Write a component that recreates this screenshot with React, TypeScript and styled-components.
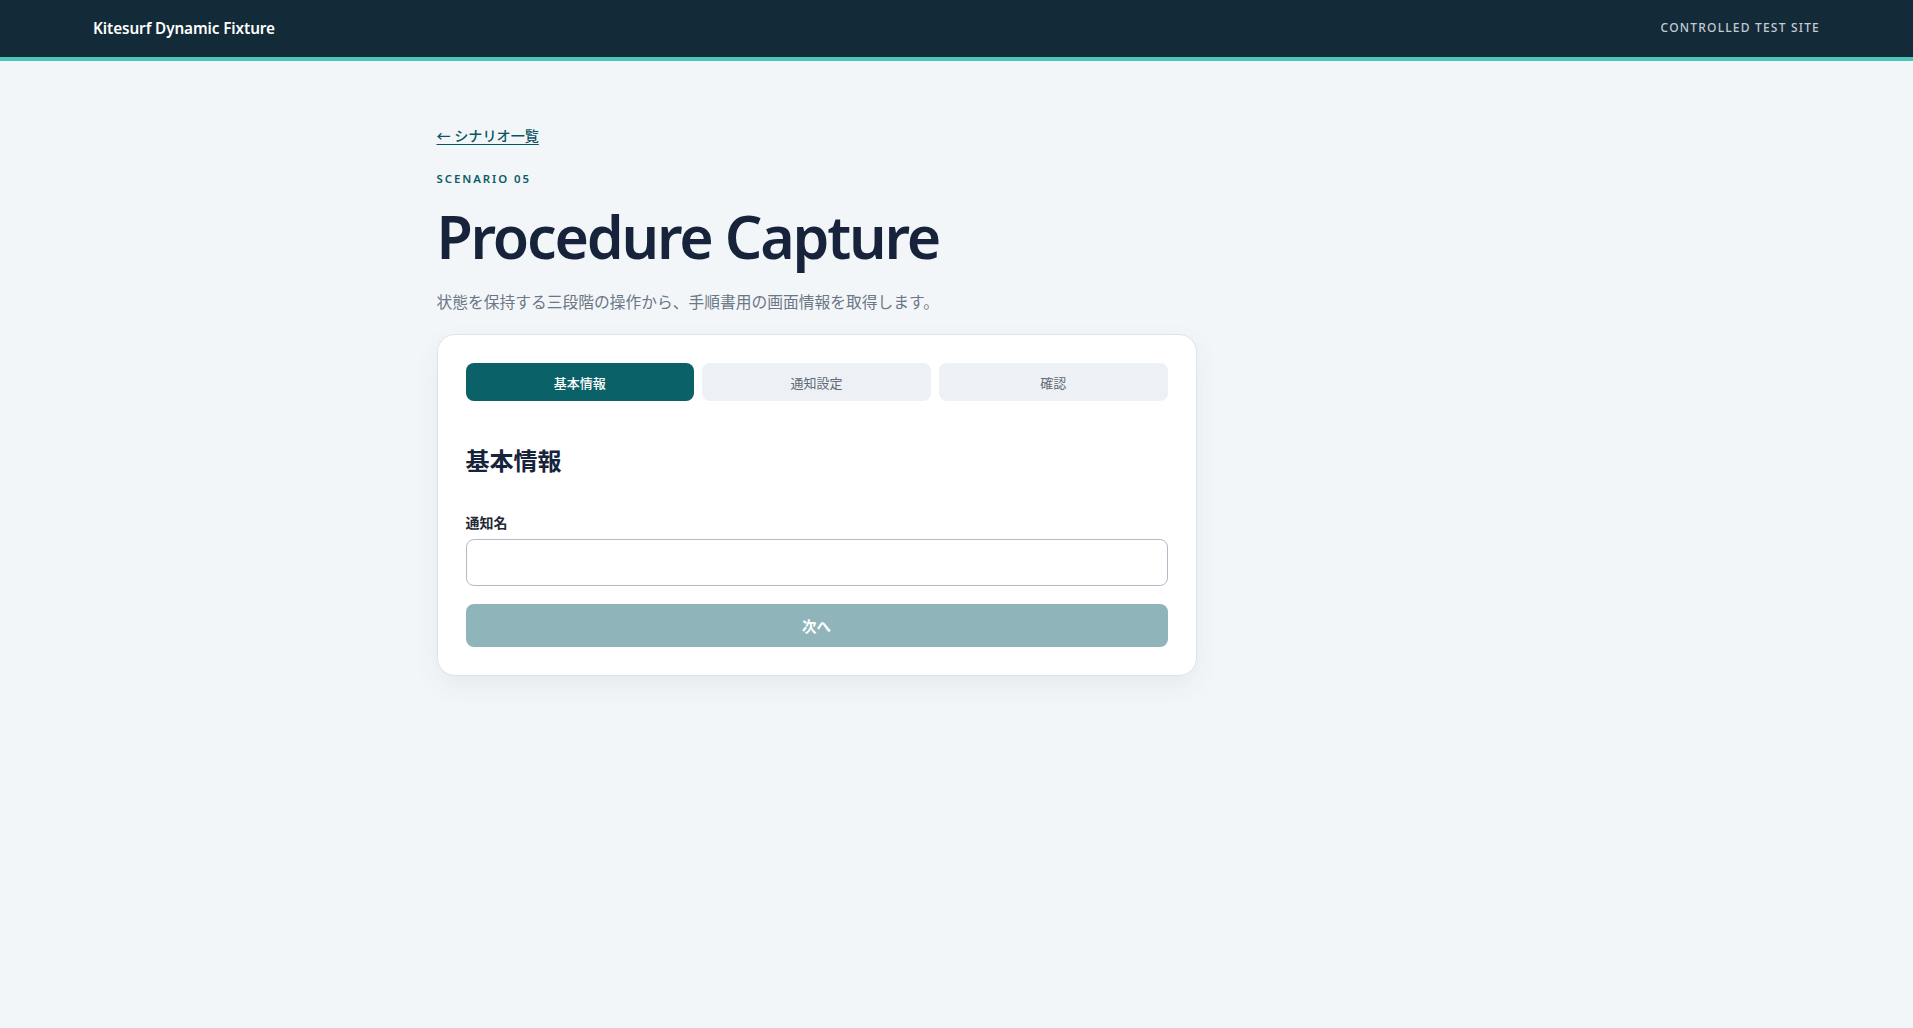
import React from "react";
import styled, { createGlobalStyle } from "styled-components";

const GlobalStyle = createGlobalStyle`
  * { box-sizing: border-box; }
  html, body { margin: 0; padding: 0; }
  body {
    background: #f3f6f9;
    font-family: "Noto Sans", "Noto Sans CJK JP", sans-serif;
    color: #17233a;
    min-height: 100vh;
  }
`;

const TopBar = styled.header`
  height: 61px;
  background: #132a38;
  border-bottom: 4px solid #4cc4bb;
  display: flex;
  align-items: center;
  justify-content: space-between;
  padding: 0 93px 2px 93px;
`;

const Brand = styled.div`
  color: #ffffff;
  font-size: 15.3px;
  font-weight: 600;
  letter-spacing: -0.1px;
`;

const SiteTag = styled.div`
  color: #c3cbd5;
  font-size: 12px;
  font-weight: 500;
  letter-spacing: 0.1em;
`;

const Main = styled.main`
  max-width: 1040px;
  margin: 0 auto;
  padding: 63px 0 80px;
`;

const BackLink = styled.a`
  display: inline-block;
  color: #0b5560;
  font-size: 14.1px;
  font-weight: 500;
  line-height: 22px;
  text-decoration: underline;
  text-underline-offset: 3px;
`;

const Eyebrow = styled.div`
  margin-top: 24px;
  color: #0b5d66;
  font-size: 11.4px;
  font-weight: 600;
  letter-spacing: 0.17em;
  line-height: 16px;
`;

const Title = styled.h1`
  margin: 14px 0 0;
  font-size: 59px;
  font-weight: 600;
  line-height: 70px;
  letter-spacing: -0.037em;
  color: #17233a;
`;

const Lead = styled.p`
  margin: 19px 0 0;
  font-size: 15.75px;
  line-height: 25px;
  color: #6b7785;
`;

const Card = styled.section`
  margin-top: 19px;
  width: 760px;
  background: #ffffff;
  border: 1px solid #dde3ea;
  border-radius: 18px;
  padding: 28px;
  box-shadow: 0 10px 28px rgba(20, 40, 60, 0.06);
`;

const Tabs = styled.div`
  display: grid;
  grid-template-columns: repeat(3, 1fr);
  gap: 8px;
`;

const Tab = styled.button<{ $active?: boolean }>`
  height: 38px;
  border: none;
  border-radius: 8px;
  font-family: inherit;
  font-size: 13px;
  font-weight: ${(p) => (p.$active ? 500 : 400)};
  background: ${(p) => (p.$active ? "#0a6168" : "#edf1f5")};
  color: ${(p) => (p.$active ? "#ffffff" : "#5f6b78")};
  cursor: pointer;
`;

const StepHeading = styled.h2`
  margin: 44px 0 0;
  font-size: 24px;
  font-weight: 700;
  line-height: 31px;
  color: #17233a;
`;

const FieldLabel = styled.label`
  display: block;
  margin-top: 38px;
  font-size: 14px;
  font-weight: 600;
  line-height: 18px;
  color: #1f2937;
`;

const TextInput = styled.input`
  display: block;
  width: 100%;
  height: 47px;
  margin-top: 7px;
  border: 1px solid #b1bac5;
  border-radius: 8px;
  background: #ffffff;
  font-family: inherit;
  font-size: 15px;
  padding: 0 14px;
  outline: none;
`;

const NextButton = styled.button`
  display: block;
  width: 100%;
  height: 43px;
  margin-top: 18px;
  border: none;
  border-radius: 8px;
  background: #8fb5ba;
  color: #ffffff;
  font-family: inherit;
  font-size: 14.5px;
  font-weight: 700;
`;

export default function App() {
  return (
    <>
      <GlobalStyle />
      <TopBar>
        <Brand>Kitesurf Dynamic Fixture</Brand>
        <SiteTag>CONTROLLED TEST SITE</SiteTag>
      </TopBar>
      <Main>
        <BackLink href="#">← シナリオ一覧</BackLink>
        <Eyebrow>SCENARIO 05</Eyebrow>
        <Title>Procedure Capture</Title>
        <Lead>状態を保持する三段階の操作から、手順書用の画面情報を取得します。</Lead>
        <Card>
          <Tabs>
            <Tab $active>基本情報</Tab>
            <Tab>通知設定</Tab>
            <Tab>確認</Tab>
          </Tabs>
          <StepHeading>基本情報</StepHeading>
          <FieldLabel htmlFor="name">通知名</FieldLabel>
          <TextInput id="name" type="text" />
          <NextButton disabled>次へ</NextButton>
        </Card>
      </Main>
    </>
  );
}
